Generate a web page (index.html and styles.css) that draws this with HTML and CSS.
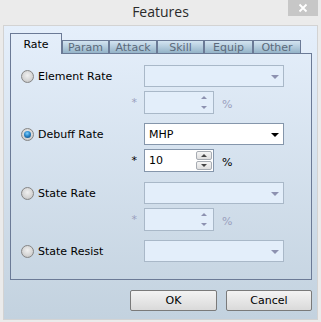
FILE: index.html
```html
<!DOCTYPE html>
<html lang="en">
<head>
    <meta charset="UTF-8">
    <title>Features</title>
    <link rel="stylesheet" href="styles.css">
</head>
<body>
    <div class="window">
        <div class="titlebar">
            Features
            <div class="close">
                <svg width="10" height="10" viewBox="0 0 10 10"><path d="M1.5 1.5 L8.5 8.5 M8.5 1.5 L1.5 8.5" stroke="#fff" stroke-width="1.8"/></svg>
            </div>
        </div>

        <div class="client">
            <div class="tabs">
                <div class="tab active" style="width:52px">Rate</div>
                <div class="tab" style="width:47px">Param</div>
                <div class="tab" style="width:48px">Attack</div>
                <div class="tab" style="width:47px">Skill</div>
                <div class="tab" style="width:49px">Equip</div>
                <div class="tab" style="width:48px">Other</div>
                <div class="tab-fill"></div>
            </div>

            <div class="panel">
                <!-- Element Rate -->
                <div class="group">
                    <div class="row">
                        <label class="opt"><span class="radio"></span>Element Rate</label>
                        <div class="combo disabled"><span class="value"></span><span class="arrow"></span></div>
                    </div>
                    <div class="row">
                        <span class="star disabled">*</span>
                        <div class="spin disabled">
                            <span class="value"></span>
                            <div class="spin-btns"><span class="up"></span><span class="down"></span></div>
                        </div>
                        <span class="pct disabled">%</span>
                    </div>
                </div>

                <!-- Debuff Rate -->
                <div class="group">
                    <div class="row">
                        <label class="opt"><span class="radio checked"></span>Debuff Rate</label>
                        <div class="combo"><span class="value">MHP</span><span class="arrow"></span></div>
                    </div>
                    <div class="row">
                        <span class="star">*</span>
                        <div class="spin">
                            <span class="value">10</span>
                            <div class="spin-btns"><span class="up"></span><span class="down"></span></div>
                        </div>
                        <span class="pct">%</span>
                    </div>
                </div>

                <!-- State Rate -->
                <div class="group">
                    <div class="row">
                        <label class="opt"><span class="radio"></span>State Rate</label>
                        <div class="combo disabled"><span class="value"></span><span class="arrow"></span></div>
                    </div>
                    <div class="row">
                        <span class="star disabled">*</span>
                        <div class="spin disabled">
                            <span class="value"></span>
                            <div class="spin-btns"><span class="up"></span><span class="down"></span></div>
                        </div>
                        <span class="pct disabled">%</span>
                    </div>
                </div>

                <!-- State Resist -->
                <div class="group">
                    <div class="row">
                        <label class="opt"><span class="radio"></span>State Resist</label>
                        <div class="combo disabled"><span class="value"></span><span class="arrow"></span></div>
                    </div>
                </div>
            </div>

            <div class="buttons">
                <button class="btn ok">OK</button>
                <button class="btn cancel">Cancel</button>
            </div>
        </div>
    </div>
</body>
</html>
```

FILE: styles.css
```css
:root {
    --tab-border: #6b7a96;
    --dim: #9aa0bd;
}

* {
    margin: 0;
    padding: 0;
    box-sizing: border-box;
    font-family: 'DejaVu Sans', sans-serif;
    font-size: 11px;
}

body {
    background: #ebebeb;
}

.window {
    width: 321px;
    height: 322px;
    display: flex;
    flex-direction: column;
    background: #ebebeb;
}

.titlebar {
    position: relative;
    height: 25px;
    line-height: 24px;
    text-align: center;
    font-family: 'Open Sans', sans-serif;
    font-size: 14px;
    color: #2a2a2a;
}

.close {
    position: absolute;
    top: 0;
    right: 3px;
    width: 30px;
    height: 16px;
    background: #c7c7c7;
    display: flex;
    align-items: center;
    justify-content: center;
}

.client {
    flex: 1;
    margin: 0 3px 2px 3px;
    border: 1px solid #d3d3d3;
    padding: 7px 5px 0 6px;
    background: linear-gradient(#e5effb, #c3d2df);
}

/* tabs */
.tabs {
    display: flex;
    align-items: flex-end;
    height: 21px;
}

.tab {
    height: 14px;
    border: 1px solid var(--tab-border);
    background: linear-gradient(#d3e4f1, #94b3c8);
    color: #5b6a7b;
    text-align: center;
    line-height: 13px;
}

.tab.active {
    height: 21px;
    border-bottom: none;
    background: transparent;
    color: #000;
    line-height: 22px;
}

.tab-fill {
    flex: 1;
    height: 1px;
    background: var(--tab-border);
}

.panel {
    height: 226px;
    border: 1px solid var(--tab-border);
    border-top: none;
    padding-top: 11px;
}

.group {
    display: flex;
    flex-direction: column;
    gap: 4px;
    margin-bottom: 9px;
}

.group:nth-child(2) {
    margin-bottom: 10px;
}

.row {
    display: flex;
    align-items: center;
}

.opt {
    width: 133px;
    padding-left: 10px;
    display: flex;
    align-items: center;
    gap: 4px;
    color: #000;
}

.radio {
    width: 13px;
    height: 13px;
    border-radius: 50%;
    border: 1px solid #858585;
    background: radial-gradient(circle at 50% 40%, #f0f0f0 0%, #d4d4d4 60%, #b8b8b8 100%);
    display: flex;
    align-items: center;
    justify-content: center;
}

.radio.checked::after {
    content: '';
    width: 7px;
    height: 7px;
    border-radius: 50%;
    background: radial-gradient(circle at 45% 35%, #7fd0ff 0%, #2a86c8 45%, #0b3f72 100%);
}

.combo {
    width: 140px;
    height: 22px;
    border: 1px solid #8596ab;
    background: #fff;
    display: flex;
    align-items: center;
    padding: 0 4px 0 4px;
}

.combo .value {
    flex: 1;
    color: #000;
}

.arrow {
    width: 0;
    height: 0;
    border-left: 4px solid transparent;
    border-right: 4px solid transparent;
    border-top: 4px solid #000;
    margin-top: 2px;
}

.combo.disabled {
    background: #e3eefa;
    border-color: #a9b8c8;
}

.combo.disabled .arrow {
    border-top-color: #8d91b0;
}

.star {
    width: 133px;
    text-align: right;
    padding-right: 7px;
    color: #000;
}

.star.disabled,
.pct.disabled {
    color: var(--dim);
}

.spin {
    width: 70px;
    height: 23px;
    border: 1px solid #8596ab;
    background: #fff;
    display: flex;
    align-items: center;
    padding: 0 1px 0 4px;
}

.spin .value {
    flex: 1;
    color: #000;
}

.spin-btns {
    display: flex;
    flex-direction: column;
    gap: 1px;
}

.spin-btns span {
    width: 16px;
    height: 9px;
    border: 1px solid #a7acb3;
    border-radius: 2px;
    background: linear-gradient(#f5f5f5, #dedede);
    display: flex;
    align-items: center;
    justify-content: center;
}

.spin-btns .up::after {
    content: '';
    border-left: 3px solid transparent;
    border-right: 3px solid transparent;
    border-bottom: 3px solid #444;
}

.spin-btns .down::after {
    content: '';
    border-left: 3px solid transparent;
    border-right: 3px solid transparent;
    border-top: 3px solid #444;
}

.spin.disabled {
    background: #e3eefa;
    border-color: #a9b8c8;
}

.spin.disabled .spin-btns span {
    border-color: transparent;
    background: transparent;
}

.spin.disabled .spin-btns .up::after {
    border-bottom-color: #8d91b0;
}

.spin.disabled .spin-btns .down::after {
    border-top-color: #8d91b0;
}

.pct {
    margin-left: 8px;
    margin-top: 3px;
    color: #000;
}

.buttons {
    display: flex;
    justify-content: flex-end;
    gap: 9px;
    margin-top: 10px;
}

.btn {
    height: 21px;
    border: 1px solid #7a7a7a;
    border-radius: 2px;
    background: linear-gradient(#f3f3f3, #dadada);
    color: #000;
}

.btn.ok {
    width: 87px;
}

.btn.cancel {
    width: 86px;
}
```
